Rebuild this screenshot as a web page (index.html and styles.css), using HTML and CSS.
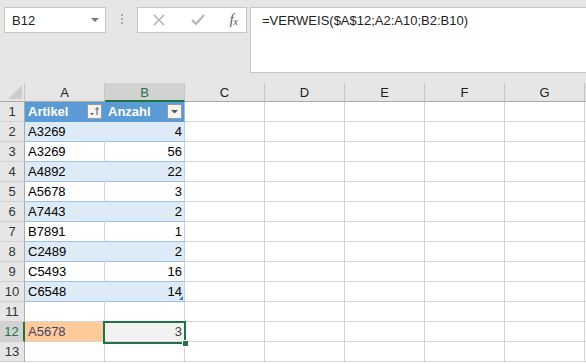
FILE: index.html
```html
<!DOCTYPE html>
<html lang="de">
<head>
    <meta charset="UTF-8">
    <title>VERWEIS</title>
    <link rel="stylesheet" href="styles.css">
</head>
<body>
    <div class="topbar">
        <div class="namebox">
            <span>B12</span>
            <span class="caret"></span>
        </div>
        <div class="grip"><i></i><i></i><i></i></div>
        <div class="fxbuttons">
            <svg width="14" height="14" viewBox="0 0 14 14"><path d="M2 2 L12 12 M12 2 L2 12" stroke="#b3b3b3" stroke-width="1.6" fill="none"/></svg>
            <svg width="16" height="14" viewBox="0 0 16 14"><path d="M2 7 L6 11 L14 2" stroke="#b3b3b3" stroke-width="2" fill="none"/></svg>
            <span class="fx">f<sub>x</sub></span>
        </div>
        <div class="formula">=VERWEIS($A$12;A2:A10;B2:B10)</div>
    </div>

    <div class="sheet" id="sheet">
        <div class="row head">
            <div class="corner"><span class="tri"></span></div>
            <div class="colhead">A</div>
            <div class="colhead active">B</div>
            <div class="colhead">C</div>
            <div class="colhead">D</div>
            <div class="colhead">E</div>
            <div class="colhead">F</div>
            <div class="colhead">G</div>
            <div class="colhead"></div>
        </div>
        <!-- rows are built below -->
    </div>

    <script>
        const data = [
            ['Artikel', 'Anzahl'],
            ['A3269', 4], ['A3269', 56], ['A4892', 22], ['A5678', 3],
            ['A7443', 2], ['B7891', 1], ['C2489', 2], ['C5493', 16], ['C6548', 14],
            [],
            ['A5678', 3],
            []
        ];
        const sheet = document.getElementById('sheet');

        data.forEach((values, i) => {
            const n = i + 1;
            const row = document.createElement('div');
            row.className = 'row';
            if (n === 1) row.classList.add('tbl-head');
            else if (n <= 10) row.classList.add(n % 2 === 0 ? 'band' : 'plain');
            if (n === 12) row.classList.add('current');

            const rh = document.createElement('div');
            rh.className = 'rowhead';
            rh.textContent = n;
            row.appendChild(rh);

            for (let c = 0; c < 8; c++) {
                const cell = document.createElement('div');
                cell.className = 'cell';
                if (n <= 10 && c < 2) cell.classList.add('t', c === 0 ? 'ta' : 'tb');
                const v = values[c];
                if (v !== undefined) {
                    const span = document.createElement('span');
                    span.textContent = v;
                    cell.appendChild(span);
                    if (typeof v === 'number') cell.classList.add('num');
                }
                if (n === 1 && c < 2) {
                    const btn = document.createElement('span');
                    btn.className = 'filter';
                    btn.innerHTML = c === 0
                        ? '<svg width="13" height="13" viewBox="0 0 13 13"><path d="M2 8 L6 8 L4 10 Z" fill="#555"/><path d="M9 3 L9 10 M7.5 4.5 L9 2.5 L10.5 4.5" stroke="#555" stroke-width="1" fill="none"/></svg>'
                        : '<svg width="13" height="13" viewBox="0 0 13 13"><path d="M3 5 L10 5 L6.5 8.5 Z" fill="#555"/></svg>';
                    cell.appendChild(btn);
                }
                if (n === 10 && c === 1) cell.insertAdjacentHTML('beforeend', '<span class="resize"></span>');
                if (n === 12 && c === 0) cell.classList.add('input');
                if (n === 12 && c === 1) {
                    cell.classList.add('output');
                    cell.insertAdjacentHTML('beforeend', '<span class="selection"><span class="handle"></span></span>');
                }
                row.appendChild(cell);
            }
            sheet.appendChild(row);
        });
    </script>
</body>
</html>
```

FILE: styles.css
```css
body {
    margin: 0;
    width: 586px;
    height: 364px;
    overflow: hidden;
    background-color: #fff;
    font-family: "Liberation Sans", Arial, sans-serif;
    color: #000;
}

/* formula bar */
.topbar {
    display: flex;
    align-items: flex-start;
    height: 83px;
    padding: 7px 0 0 4px;
    box-sizing: border-box;
    background-color: #e6e6e6;
}

.namebox {
    display: flex;
    align-items: center;
    justify-content: space-between;
    width: 102px;
    height: 26px;
    box-sizing: border-box;
    padding: 0 6px 0 7px;
    background-color: #fff;
    border: 1px solid #c6c6c6;
    font-size: 13px;
    color: #222;
}

.caret {
    width: 0;
    height: 0;
    border-left: 4px solid transparent;
    border-right: 4px solid transparent;
    border-top: 4px solid #777;
}

.grip {
    display: flex;
    flex-direction: column;
    gap: 2px;
    width: 2px;
    margin: 7px 14px 0 15px;
}

.grip i {
    width: 2px;
    height: 2px;
    background-color: #a8a8a8;
}

.fxbuttons {
    display: flex;
    align-items: center;
    justify-content: space-between;
    width: 110px;
    height: 26px;
    box-sizing: border-box;
    padding: 0 8px 0 14px;
    background-color: #fff;
    border: 1px solid #c6c6c6;
}

.fx {
    font-family: "Liberation Serif", serif;
    font-style: italic;
    font-size: 14px;
    color: #555;
}

.fx sub {
    font-size: 10px;
    vertical-align: -1px;
}

.formula {
    flex: 1;
    height: 66px;
    margin-left: 3px;
    padding: 5px 11px;
    box-sizing: border-box;
    background-color: #fff;
    border: 1px solid #c6c6c6;
    border-right: none;
    font-size: 13px;
    color: #222;
}

/* grid */
.sheet {
    width: 600px;
    background-color: #e6e6e6;
}

.row {
    display: flex;
    height: 20px;
}

.row.head {
    height: 19px;
    background-color: #e6e6e6;
}

.corner {
    position: relative;
    width: 25px;
    flex: none;
    box-sizing: border-box;
    border-right: 1px solid #c6c6c6;
    border-bottom: 1px solid #ababab;
}

.tri {
    position: absolute;
    right: 2px;
    bottom: 2px;
    width: 0;
    height: 0;
    border-left: 14px solid transparent;
    border-bottom: 14px solid #cdcdcd;
}

.colhead {
    width: 80px;
    flex: none;
    box-sizing: border-box;
    border-right: 1px solid #c6c6c6;
    border-bottom: 1px solid #ababab;
    text-align: center;
    font-size: 13px;
    line-height: 19px;
    color: #222;
}

.colhead.active {
    background-color: #d2d2d2;
    border-bottom: 2px solid #217346;
    color: #217346;
}

.rowhead {
    width: 25px;
    flex: none;
    box-sizing: border-box;
    background-color: #e6e6e6;
    border-right: 1px solid #ababab;
    border-bottom: 1px solid #cfcfcf;
    text-align: center;
    font-size: 13px;
    line-height: 20px;
    color: #333;
}

.current .rowhead {
    background-color: #d2d2d2;
    border-right: 2px solid #217346;
    color: #217346;
}

.cell {
    position: relative;
    display: flex;
    align-items: center;
    width: 80px;
    flex: none;
    box-sizing: border-box;
    padding: 0 3px 0 3px;
    background-color: #fff;
    border-right: 1px solid #d4d4d4;
    border-bottom: 1px solid #d4d4d4;
    font-size: 13px;
    white-space: nowrap;
}

.cell.num {
    justify-content: flex-end;
    padding-right: 2px;
}

/* table A1:B10 */
.tbl-head .t {
    background-color: #5b9bd5;
    border-color: #5b9bd5;
    color: #fff;
    font-weight: bold;
    padding-right: 2px;
}

.tbl-head .tb {
    border-right-color: #9bc2e6;
}

.filter {
    display: flex;
    margin-left: auto;
    width: 13px;
    height: 13px;
    background-color: #f3f3f3;
    border: 1px solid #9a9a9a;
}

.band .t {
    background-color: #ddebf7;
    border-bottom-color: #9bc2e6;
}

.band .ta {
    border-right-color: #ddebf7;
}

.band .tb,
.plain .tb {
    border-right-color: #bcd3ea;
}

.plain .t {
    border-bottom-color: #9bc2e6;
}

.resize {
    position: absolute;
    right: 1px;
    bottom: 1px;
    width: 0;
    height: 0;
    border-left: 4px solid transparent;
    border-bottom: 4px solid #4472c4;
}

/* cell styles row 12 */
.cell.input {
    background-color: #ffcc99;
    border-right-color: #ffcc99;
    color: #3f3f76;
}

.cell.output {
    background-color: #f2f2f2;
    color: #3f3f3f;
}

.selection {
    position: absolute;
    left: -2px;
    top: -1px;
    width: 83px;
    height: 23px;
    box-sizing: border-box;
    border: 2px solid #217346;
    z-index: 2;
}

.handle {
    position: absolute;
    right: -5px;
    bottom: -5px;
    width: 5px;
    height: 5px;
    background-color: #217346;
    border: 1px solid #fff;
}
```
